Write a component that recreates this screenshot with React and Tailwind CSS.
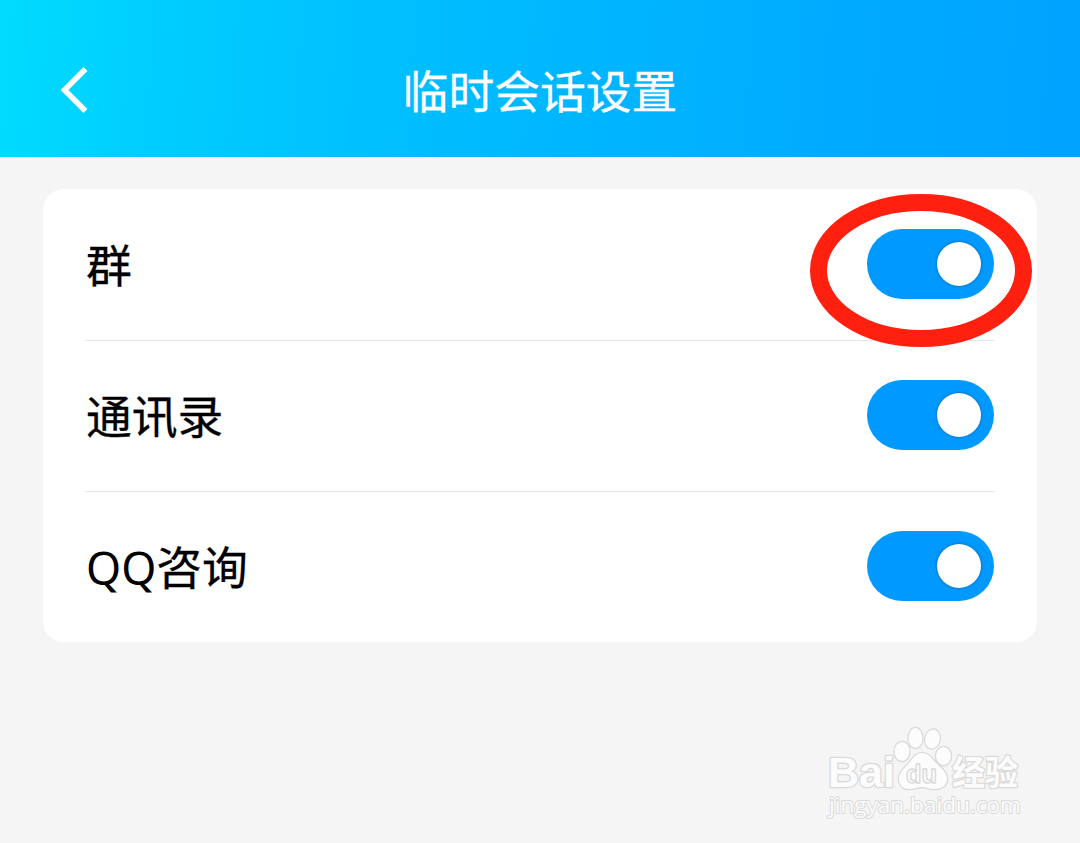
import React from "react";

const options = [
  { latin: "", name: "群" },
  { latin: "", name: "通讯录" },
  { latin: "QQ", name: "咨询" },
];

const Header = () => {
  return (
    <header className="h-[157px] pt-[22px] px-[60px] grid grid-cols-[28px_1fr_28px] items-center bg-[linear-gradient(94deg,#00dcff_0%,#00ceff_14%,#00c0ff_34%,#00b4ff_58%,#00a9ff_82%,#00a3ff_100%)]">
      <button aria-label="返回">
        <svg width="28" height="46" viewBox="0 0 28 46" fill="none">
          <path d="M25.5 2 L4.5 23 L25.5 44" stroke="white" strokeWidth="5.6" />
        </svg>
      </button>
      <h1 className="-mt-0.5 text-[45.8px] leading-[46px] text-white text-center [-webkit-text-stroke:0.3px_white]">
        临时会话设置
      </h1>
    </header>
  );
};

const Toggle = () => {
  return (
    <button
      role="switch"
      aria-checked="true"
      className="w-[127px] h-[70px] pr-[13px] flex items-center justify-end rounded-full bg-[#0099ff]"
    >
      <span className="size-11 rounded-full bg-white shadow-[0_0_3px_rgba(0,50,100,0.55)]" />
    </button>
  );
};

const Marker = () => {
  return (
    <svg
      className="absolute left-[810px] top-[194px] pointer-events-none"
      width="222"
      height="153"
      viewBox="0 0 222 153"
    >
      <ellipse cx="111" cy="76.5" rx="102.5" ry="68" fill="none" stroke="#ff2010" strokeWidth="17" />
    </svg>
  );
};

const Watermark = () => {
  return (
    <svg
      className="absolute left-[820px] top-[720px] pointer-events-none"
      width="210"
      height="104"
      viewBox="0 0 210 104"
      fill="#fcfcfc"
      stroke="#dadada"
      strokeWidth="2.6"
      strokeLinejoin="round"
      style={{ paintOrder: "stroke" }}
    >
      <text x="8" y="67" fontSize="42" fontWeight="700" fontFamily="Liberation Sans, sans-serif" textLength="67" lengthAdjust="spacingAndGlyphs">
        Bai
      </text>
      <ellipse cx="82" cy="31.5" rx="7.5" ry="9.5" />
      <ellipse cx="95.5" cy="18" rx="7" ry="10" />
      <ellipse cx="112.5" cy="19" rx="7.2" ry="9.5" transform="rotate(12 112.5 19)" />
      <ellipse cx="123.5" cy="36" rx="7.5" ry="9" />
      <path d="M102.5 33 C109 33 112 39 116 43 C121 48 127 52 127 59 C127 66 121 69 115 69 C108 69 106 67 102 67 C98 67 95 69 89 69 C82 69 79 64 79 59 C79 52 84 49 89 43 C93 38 96 33 102.5 33 Z" />
      <text x="86" y="63" fontSize="26" fontWeight="700" strokeWidth="1.4" fontFamily="Liberation Sans, sans-serif" textLength="31" lengthAdjust="spacingAndGlyphs" style={{ paintOrder: "normal" }}>
        du
      </text>
      <text x="132" y="65" fontSize="34" fontWeight="700" fontFamily="Noto Sans CJK SC, sans-serif" textLength="66" lengthAdjust="spacingAndGlyphs">
        经验
      </text>
      <text x="9" y="93" fontSize="22" strokeWidth="2" fontFamily="Open Sans, sans-serif" textLength="192" lengthAdjust="spacingAndGlyphs">
        jingyan.baidu.com
      </text>
    </svg>
  );
};

const App = () => {
  return (
    <div className="relative w-[1080px] h-[843px] overflow-hidden bg-[#f5f5f5] font-['Noto_Sans_CJK_SC',sans-serif]">
      <Header />
      <main className="pt-8 px-[43px]">
        <ul className="h-[453px] rounded-[21px] bg-white px-[43px]">
          {options.map(({ latin, name }) => (
            <li
              key={name}
              className="h-[151px] pt-10 flex items-start justify-between not-first:shadow-[inset_0_1px_#e6e6e6]"
            >
              <div className="-mt-px flex items-baseline text-[45.8px] leading-[70px] text-black">
                {latin && <span className="text-[45px] font-['Noto_Sans',sans-serif]">{latin}</span>}
                <span className="[-webkit-text-stroke:0.3px_black]">{name}</span>
              </div>
              <Toggle />
            </li>
          ))}
        </ul>
      </main>
      <Marker />
      <Watermark />
    </div>
  );
};

export default App;
